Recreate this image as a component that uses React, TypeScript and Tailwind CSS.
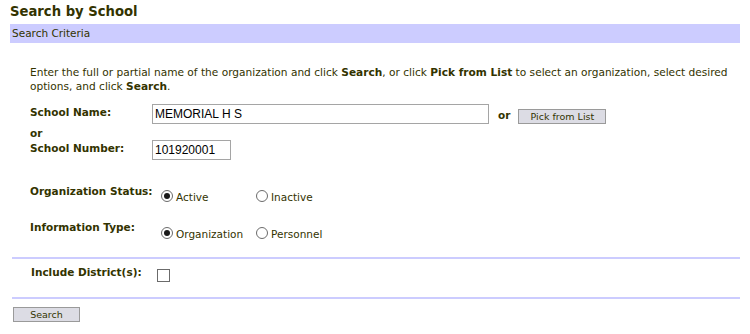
import React from 'react';

const Radio: React.FC<{ checked?: boolean }> = ({ checked }) => (
  <span className="flex h-[12px] w-[12px] shrink-0 items-center justify-center rounded-full border border-[#6b6b6b] bg-white">
    {checked && <span className="h-[6px] w-[6px] rounded-full bg-[#1a1a1a]" />}
  </span>
);

const Option: React.FC<{ label: string; checked?: boolean; width?: string }> = ({ label, checked, width }) => (
  <label className={`flex items-center gap-[3px] ${width ?? ''}`}>
    <Radio checked={checked} />
    <span className="pt-[3px] text-[10.5px] leading-[14px]">{label}</span>
  </label>
);

const App: React.FC = () => {
  return (
    <div className="h-[334px] overflow-hidden bg-white px-[10px] pt-[3px] font-['DejaVu_Sans',Verdana,sans-serif] text-[#333300]">
      <h1 className="text-[13.2px] font-bold leading-[18px]">Search by School</h1>
      <div className="mt-[3px] h-[19px] bg-[#ccccff] pl-[2px] text-[10.5px] leading-[19px]">Search Criteria</div>

      <p className="mt-[22px] whitespace-nowrap pl-[20px] text-[10.6px] leading-[14px]">
        Enter the full or partial name of the organization and click <b>Search</b>, or click <b>Pick from List</b> to select an organization, select desired
        <br />
        options, and click <b>Search</b>.
      </p>

      <div className="mt-[11px] flex items-start pl-[20px]">
        <div className="w-[122px] whitespace-nowrap pt-[1px] text-[10.5px] font-bold leading-[14px]">School Name:</div>
        <input
          readOnly
          value="MEMORIAL H S"
          className="h-[20px] w-[337px] border border-[#a5a5a5] px-[2px] font-['Liberation_Sans',Arial,sans-serif] text-[12px] text-black outline-none"
        />
        <span className="ml-[9px] pt-[4px] text-[10.5px] font-bold leading-[14px]">or</span>
        <button className="ml-[8px] mt-[5px] h-[15px] w-[88px] border border-[#9a9a9a] bg-[#dcdce4] text-[9.5px] leading-[13px] text-[#333300]">
          Pick from List
        </button>
      </div>

      <div className="mt-[2px] pl-[20px] text-[10.5px] font-bold leading-[14px]">or</div>

      <div className="flex items-start pl-[20px]">
        <div className="w-[122px] whitespace-nowrap pt-[1px] text-[10.5px] font-bold leading-[14px]">School Number:</div>
        <input
          readOnly
          value="101920001"
          className="h-[20px] w-[79px] border border-[#a5a5a5] px-[2px] font-['Liberation_Sans',Arial,sans-serif] text-[12px] text-black outline-none"
        />
      </div>

      <div className="mt-[24px] flex items-start pl-[20px]">
        <div className="w-[131px] whitespace-nowrap text-[10.5px] font-bold leading-[14px]">Organization Status:</div>
        <div className="flex pt-[3px]">
          <Option label="Active" checked width="w-[95px]" />
          <Option label="Inactive" />
        </div>
      </div>

      <div className="mt-[16px] flex items-start pl-[20px]">
        <div className="w-[131px] whitespace-nowrap text-[10.5px] font-bold leading-[14px]">Information Type:</div>
        <div className="flex pt-[4px]">
          <Option label="Organization" checked width="w-[95px]" />
          <Option label="Personnel" />
        </div>
      </div>

      <div className="ml-[2px] mt-[16px] h-[2px] bg-[#ccccff]" />

      <div className="mt-[5px] flex items-start pl-[21px]">
        <span className="w-[126px] whitespace-nowrap pt-[1px] text-[10.5px] font-bold leading-[14px]">Include District(s):</span>
        <span className="mt-[5px] h-[13px] w-[13px] border border-[#6b6b6b] bg-white" />
      </div>

      <div className="ml-[2px] mt-[15px] h-[2px] bg-[#ccccff]" />

      <button className="ml-[3px] mt-[8px] h-[15px] w-[67px] border border-[#9a9a9a] bg-[#dcdce4] text-[9.5px] leading-[13px] text-[#333300]">
        Search
      </button>
    </div>
  );
};

export default App;
